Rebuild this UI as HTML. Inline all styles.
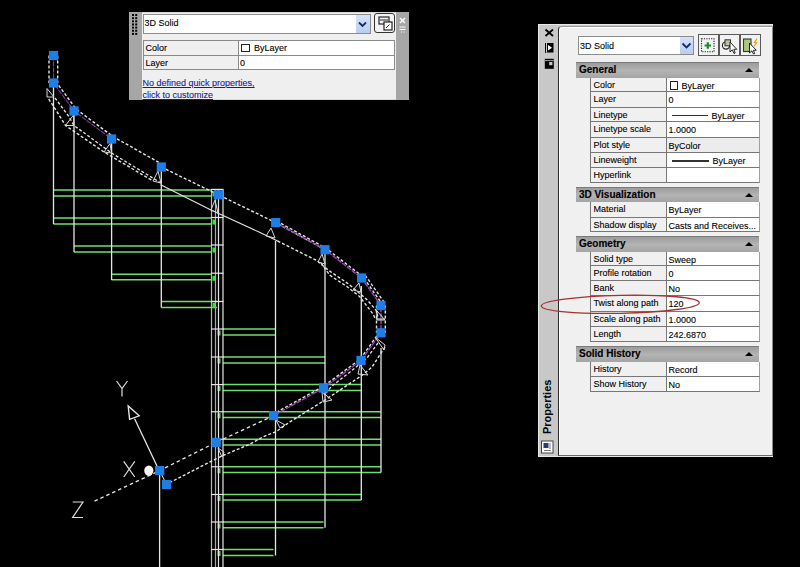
<!DOCTYPE html>
<html><head><meta charset="utf-8"><style>
*{margin:0;padding:0;box-sizing:border-box}
html,body{width:800px;height:567px;background:#000;overflow:hidden;position:relative;font-family:"Liberation Sans",sans-serif;}
.a{position:absolute}
.pc,.vc,.t9{-webkit-text-stroke:0.1px currentColor}
.hd{-webkit-text-stroke:0.15px #000}
svg.dr{position:absolute;left:0;top:0}
.t9{font-size:9px;color:#000;white-space:nowrap}
.hd{position:absolute;left:576px;width:183px;background:linear-gradient(#9c9c9c,#b4b4b4 50%,#a4a4a4);border-top:1px solid #7a7a7a;font-weight:bold;font-size:10px;line-height:14px;padding-left:3px;color:#000;white-space:nowrap}
.up{position:absolute;right:6px;top:5px;width:0;height:0;border-left:4px solid transparent;border-right:4px solid transparent;border-bottom:4px solid #000}
.pc{position:absolute;left:589.5px;width:76px;background:#f0f0f0;border-left:1px solid #777;border-bottom:1px solid #777;font-size:9px;white-space:nowrap}
.pc span{position:absolute;left:3px;top:2px;line-height:11px}
.vc{position:absolute;left:665.5px;width:94px;border-left:1px solid #777;border-right:1px solid #a0a0a0;border-bottom:1px solid #777;font-size:9px;white-space:nowrap}
.vc span{position:absolute;left:2px;top:3px;line-height:11px}
.chk{position:absolute;left:3px;top:2.5px;width:8.5px;height:9px;border:1px solid #222;background:#fff}
.ln{position:absolute;left:5px;top:7px;height:1px;background:#333}
</style></head><body>
<svg class="dr" width="800" height="567" viewBox="0 0 800 567">
<line x1="53.5" y1="190" x2="212" y2="190" stroke="#6ee06e" stroke-width="1.5" />
<line x1="53.5" y1="196" x2="212" y2="196" stroke="#6ee06e" stroke-width="1.5" />
<line x1="53.5" y1="218" x2="212" y2="218" stroke="#6ee06e" stroke-width="1.5" />
<line x1="53.5" y1="224" x2="212" y2="224" stroke="#6ee06e" stroke-width="1.5" />
<line x1="74" y1="246" x2="212" y2="246" stroke="#6ee06e" stroke-width="1.5" />
<line x1="74" y1="252" x2="212" y2="252" stroke="#6ee06e" stroke-width="1.5" />
<line x1="111.6" y1="274.3" x2="212" y2="274.3" stroke="#6ee06e" stroke-width="1.5" />
<line x1="111.6" y1="279.8" x2="212" y2="279.8" stroke="#6ee06e" stroke-width="1.5" />
<line x1="161.3" y1="301.5" x2="217" y2="301.5" stroke="#6ee06e" stroke-width="1.5" />
<line x1="161.3" y1="307.5" x2="217" y2="307.5" stroke="#6ee06e" stroke-width="1.5" />
<line x1="223" y1="329" x2="275.5" y2="329" stroke="#6ee06e" stroke-width="1.5" />
<line x1="223" y1="335" x2="275.5" y2="335" stroke="#6ee06e" stroke-width="1.5" />
<line x1="223" y1="357" x2="325" y2="357" stroke="#6ee06e" stroke-width="1.5" />
<line x1="223" y1="363" x2="325" y2="363" stroke="#6ee06e" stroke-width="1.5" />
<line x1="223" y1="384.6" x2="361.3" y2="384.6" stroke="#6ee06e" stroke-width="1.5" />
<line x1="223" y1="390.6" x2="361.3" y2="390.6" stroke="#6ee06e" stroke-width="1.5" />
<line x1="223" y1="411.75" x2="381" y2="411.75" stroke="#6ee06e" stroke-width="1.5" />
<line x1="223" y1="417.5" x2="381" y2="417.5" stroke="#6ee06e" stroke-width="1.5" />
<line x1="223" y1="439.25" x2="381" y2="439.25" stroke="#6ee06e" stroke-width="1.5" />
<line x1="223" y1="445" x2="381" y2="445" stroke="#6ee06e" stroke-width="1.5" />
<line x1="223" y1="466.75" x2="381" y2="466.75" stroke="#6ee06e" stroke-width="1.5" />
<line x1="223" y1="472.5" x2="381" y2="472.5" stroke="#6ee06e" stroke-width="1.5" />
<line x1="223" y1="494.5" x2="361.3" y2="494.5" stroke="#6ee06e" stroke-width="1.5" />
<line x1="223" y1="500" x2="361.3" y2="500" stroke="#6ee06e" stroke-width="1.5" />
<line x1="223" y1="522" x2="323.5" y2="522" stroke="#6ee06e" stroke-width="1.5" />
<line x1="223" y1="527.7" x2="323.5" y2="527.7" stroke="#6ee06e" stroke-width="1.5" />
<line x1="223" y1="549.5" x2="273.5" y2="549.5" stroke="#6ee06e" stroke-width="1.5" />
<line x1="223" y1="555.4" x2="273.5" y2="555.4" stroke="#6ee06e" stroke-width="1.5" />
<rect x="212.5" y="191.5" width="2.5" height="5" fill="#3ae03a"/>
<rect x="212.5" y="219.5" width="2.5" height="5" fill="#3ae03a"/>
<rect x="212.5" y="247.5" width="2.5" height="5" fill="#3ae03a"/>
<rect x="212.5" y="275.8" width="2.5" height="5" fill="#3ae03a"/>
<rect x="212.5" y="303.0" width="2.5" height="5" fill="#3ae03a"/>
<rect x="217.5" y="330.5" width="3" height="5" fill="#3ae03a"/>
<rect x="217.5" y="358.5" width="3" height="5" fill="#3ae03a"/>
<rect x="217.5" y="386.1" width="3" height="5" fill="#3ae03a"/>
<rect x="217.5" y="413.25" width="3" height="5" fill="#3ae03a"/>
<rect x="217.5" y="440.75" width="3" height="5" fill="#3ae03a"/>
<rect x="217.5" y="468.25" width="3" height="5" fill="#3ae03a"/>
<rect x="217.5" y="496.0" width="3" height="5" fill="#3ae03a"/>
<rect x="217.5" y="523.5" width="3" height="5" fill="#3ae03a"/>
<rect x="217.5" y="551.0" width="3" height="5" fill="#3ae03a"/>
<line x1="53.5" y1="87" x2="53.5" y2="224" stroke="#e6e6e6" stroke-width="1.3" />
<line x1="74" y1="115" x2="74" y2="252" stroke="#e6e6e6" stroke-width="1.3" />
<line x1="111.6" y1="143" x2="111.6" y2="280" stroke="#e6e6e6" stroke-width="1.3" />
<line x1="161.3" y1="171" x2="161.3" y2="307.5" stroke="#e6e6e6" stroke-width="1.3" />
<line x1="275.5" y1="241" x2="275.5" y2="555.4" stroke="#e6e6e6" stroke-width="1.3" />
<line x1="325" y1="254" x2="325" y2="527.7" stroke="#e6e6e6" stroke-width="1.3" />
<line x1="361.3" y1="286" x2="361.3" y2="500" stroke="#e6e6e6" stroke-width="1.3" />
<line x1="381" y1="348" x2="381" y2="472.5" stroke="#e6e6e6" stroke-width="1.3" />
<line x1="159.6" y1="475" x2="159.6" y2="567" stroke="#e6e6e6" stroke-width="1.3" />
<line x1="211.5" y1="189.4" x2="211.5" y2="567" stroke="#b8b8b8" stroke-width="1.2" />
<line x1="215.5" y1="189.4" x2="215.5" y2="567" stroke="#a8a8a8" stroke-width="1.2" />
<line x1="218.5" y1="189.4" x2="218.5" y2="567" stroke="#e6e6e6" stroke-width="1.2" />
<line x1="223" y1="189.4" x2="223" y2="567" stroke="#e6e6e6" stroke-width="1.2" />
<line x1="211" y1="189.4" x2="223.5" y2="189.4" stroke="#e6e6e6" stroke-width="1.2" />
<line x1="211" y1="217.5" x2="223.5" y2="217.5" stroke="#e6e6e6" stroke-width="1.2" />
<line x1="211" y1="245" x2="223.5" y2="245" stroke="#e6e6e6" stroke-width="1.2" />
<line x1="211" y1="273.2" x2="223.5" y2="273.2" stroke="#e6e6e6" stroke-width="1.2" />
<line x1="211" y1="301.5" x2="223.5" y2="301.5" stroke="#e6e6e6" stroke-width="1.2" />
<line x1="211" y1="329" x2="223.5" y2="329" stroke="#e6e6e6" stroke-width="1.2" />
<line x1="211" y1="357" x2="223.5" y2="357" stroke="#e6e6e6" stroke-width="1.2" />
<line x1="211" y1="384.6" x2="223.5" y2="384.6" stroke="#e6e6e6" stroke-width="1.2" />
<line x1="211" y1="411.75" x2="223.5" y2="411.75" stroke="#e6e6e6" stroke-width="1.2" />
<line x1="211" y1="439.25" x2="223.5" y2="439.25" stroke="#e6e6e6" stroke-width="1.2" />
<line x1="211" y1="466.75" x2="223.5" y2="466.75" stroke="#e6e6e6" stroke-width="1.2" />
<line x1="211" y1="494.5" x2="223.5" y2="494.5" stroke="#e6e6e6" stroke-width="1.2" />
<line x1="211" y1="522" x2="223.5" y2="522" stroke="#e6e6e6" stroke-width="1.2" />
<line x1="211" y1="549.5" x2="223.5" y2="549.5" stroke="#e6e6e6" stroke-width="1.2" />
<polyline points="57.7,55.5 57.7,83.0" fill="none" stroke="#e6e6e6" stroke-width="1.4" stroke-dasharray="3,2" />
<polyline points="49.0,55.5 49.0,83.0" fill="none" stroke="#e6e6e6" stroke-width="1.4" stroke-dasharray="3,2" />
<polyline points="55.759215896429666,81.34593121868542 75.94313004797017,108.98400257523095 113.11180097119782,136.64321027168623 162.67436245503418,164.56050664231435" fill="none" stroke="#e6e6e6" stroke-width="1.4" stroke-dasharray="3,2" />
<polyline points="161.3,167 218.3,194.8 275.7,222.6 325,249.7" fill="none" stroke="#e6e6e6" stroke-width="1.4" stroke-dasharray="3,2" />
<polyline points="276.56708525260615,221.02260874710396 325.975587689197,248.187310785162 362.8705132640582,276.72493292495955 382.4708385467727,304.46239026154944" fill="none" stroke="#e6e6e6" stroke-width="1.4" stroke-dasharray="3,2" />
<polyline points="365.27709636693186,275.40597565387355 384.67709636693183,302.90597565387355" fill="none" stroke="#e6e6e6" stroke-width="1.3" stroke-dasharray="3,2" />
<polyline points="385.3,305.5 385.3,332.8" fill="none" stroke="#e6e6e6" stroke-width="1.4" stroke-dasharray="3,2" />
<polyline points="376.5,305.5 376.5,332.8" fill="none" stroke="#e6e6e6" stroke-width="1.4" stroke-dasharray="3,2" />
<polyline points="379.7853752358342,331.9198371274161 359.9602616426952,359.3188227951214 322.7990105129181,386.73176664545355 272.8751062757826,414.2867867314902" fill="none" stroke="#e6e6e6" stroke-width="1.4" stroke-dasharray="3,2" />
<polyline points="273.6,415.6 216,442.4 159.7,470.6 94,501.4" fill="none" stroke="#e6e6e6" stroke-width="1.3" stroke-dasharray="3.5,3" />
<polyline points="53.5,55.5 53.5,83 74,111 111.6,139" fill="none" stroke="#8a3a9a" stroke-width="1.1" stroke-dasharray="5,1" />
<polyline points="275.7,222.6 325,249.7 361.6,278 381,305.5 381,332.8 361,360.4 323.6,388 273.6,415.6" fill="none" stroke="#9a48b0" stroke-width="1.4" stroke-dasharray="5,1" />
<polyline points="48.7,99 57.3,112.2 65.5,125.5 104,152 153,181" fill="none" stroke="#e6e6e6" stroke-width="1.4" stroke-dasharray="3,2" />
<polyline points="160.6,184.7 211,210 260,232.5 277.6,241" fill="none" stroke="#e6e6e6" stroke-width="1.1"  />
<polyline points="277.6,241 317,260.7 328.5,270.3 348.2,283.7 366.5,299.2 376.4,310.5 378,318" fill="none" stroke="#e6e6e6" stroke-width="1.4" stroke-dasharray="3,2" />
<line x1="376" y1="319" x2="385" y2="319" stroke="#e6e6e6" stroke-width="1.1" />
<polyline points="321,263 329.9,275.3 346.8,286.5 359.5,296.4 373.6,314.8 375,319" fill="none" stroke="#e6e6e6" stroke-width="1.3" stroke-dasharray="3,2" />
<polyline points="55,98 68.5,116 74,125.5 111.5,153 161,183" fill="none" stroke="#e6e6e6" stroke-width="1.3" stroke-dasharray="3,2" />
<polyline points="378,343 367,358 350,372 332,386 324,395" fill="none" stroke="#e6e6e6" stroke-width="1.3" stroke-dasharray="3,2" />
<polyline points="385,347 372,367 362.5,375 325,400 290,421.8 276,431.7 263.5,436.6 249.4,444.4 222.6,455.6 200,467 171,482" fill="none" stroke="#e6e6e6" stroke-width="1.4" stroke-dasharray="3,2" />
<line x1="159.7" y1="470.6" x2="166.5" y2="484.5" stroke="#e6e6e6" stroke-width="1" />
<polygon points="47,88.5 47,97 54,97" fill="none" stroke="#d8d8d8" stroke-width="1"/>
<polygon points="73.5,115 65.5,125.5 74,125.5" fill="none" stroke="#d8d8d8" stroke-width="1"/>
<polygon points="110,143.5 104,152 111.5,153" fill="none" stroke="#d8d8d8" stroke-width="1"/>
<polygon points="158,171 153,181 161,183" fill="none" stroke="#d8d8d8" stroke-width="1"/>
<polygon points="215,200 211,210 218,213" fill="none" stroke="#d8d8d8" stroke-width="1"/>
<polygon points="271,228 266,236 275,238" fill="none" stroke="#d8d8d8" stroke-width="1"/>
<polygon points="322,254 318,262 325,264" fill="none" stroke="#d8d8d8" stroke-width="1"/>
<polygon points="359,283 353,290 361,292" fill="none" stroke="#d8d8d8" stroke-width="1"/>
<polygon points="377,311 377,320 385,320" fill="none" stroke="#d8d8d8" stroke-width="1"/>
<polygon points="375,337 385,345 384,350" fill="none" stroke="#d8d8d8" stroke-width="1"/>
<polygon points="360,365 368,375 358,374" fill="none" stroke="#d8d8d8" stroke-width="1"/>
<polygon points="322,392 332,400 323,402" fill="none" stroke="#d8d8d8" stroke-width="1"/>
<polygon points="276,420 285,425 280,428" fill="none" stroke="#d8d8d8" stroke-width="1"/>
<polygon points="218,448 224,452 222,457" fill="none" stroke="#d8d8d8" stroke-width="1"/>
<rect x="48.9" y="50.9" width="9.2" height="9.2" fill="#1f7ee6"/>
<rect x="48.9" y="78.4" width="9.2" height="9.2" fill="#1f7ee6"/>
<rect x="69.4" y="106.4" width="9.2" height="9.2" fill="#1f7ee6"/>
<rect x="107.0" y="134.4" width="9.2" height="9.2" fill="#1f7ee6"/>
<rect x="156.70000000000002" y="162.4" width="9.2" height="9.2" fill="#1f7ee6"/>
<rect x="213.70000000000002" y="190.20000000000002" width="9.2" height="9.2" fill="#1f7ee6"/>
<rect x="271.09999999999997" y="218.0" width="9.2" height="9.2" fill="#1f7ee6"/>
<rect x="320.4" y="245.1" width="9.2" height="9.2" fill="#1f7ee6"/>
<rect x="357.0" y="273.4" width="9.2" height="9.2" fill="#1f7ee6"/>
<rect x="376.4" y="300.9" width="9.2" height="9.2" fill="#1f7ee6"/>
<rect x="376.4" y="328.2" width="9.2" height="9.2" fill="#1f7ee6"/>
<rect x="356.4" y="355.79999999999995" width="9.2" height="9.2" fill="#1f7ee6"/>
<rect x="319.0" y="383.4" width="9.2" height="9.2" fill="#1f7ee6"/>
<rect x="269.0" y="411.0" width="9.2" height="9.2" fill="#1f7ee6"/>
<rect x="211.4" y="437.79999999999995" width="9.2" height="9.2" fill="#1f7ee6"/>
<rect x="155.1" y="466.0" width="9.2" height="9.2" fill="#1f7ee6"/>
<rect x="161.9" y="479.9" width="9.2" height="9.2" fill="#1f7ee6"/>
<line x1="157" y1="466" x2="134.6" y2="418.7" stroke="#e6e6e6" stroke-width="1.3"/>
<polygon points="128.2,406 139.2,415.8 129.6,419.4" fill="none" stroke="#e6e6e6" stroke-width="1.4"/>
<ellipse cx="148.8" cy="470.6" rx="4.6" ry="5.2" fill="#f4f4f4"/>
<path d="M116.5,381 L122,388.5 L127.5,381 M122,388.5 L122,396.5" fill="none" stroke="#e0e0e0" stroke-width="1.2"/>
<path d="M123.7,461.4 L134.8,477 M134.8,461.4 L123.7,477" fill="none" stroke="#e0e0e0" stroke-width="1.2"/>
<path d="M72.7,502 L83,502 L72.7,517.5 L83,517.5" fill="none" stroke="#e0e0e0" stroke-width="1.2"/>
</svg>
<!-- quick properties panel -->
<div class="a" style="left:129px;top:12px;width:280px;height:88px;background:#efefef;border:1px solid #d8d8d8"></div>
<div class="a" style="left:129px;top:12px;width:13px;height:88px;background:#a6a6a6"></div>
<div class="a" style="left:396px;top:12px;width:13px;height:88px;background:#a6a6a6"></div>
<div class="a" style="left:142.5px;top:13.5px;width:228px;height:20px;background:#fff;border:1px solid #8c8c8c"></div>
<div class="a" style="left:356px;top:14.5px;width:14px;height:18px;background:linear-gradient(#d6e2f8,#b8cdf2)"></div>
<div class="a t9" style="left:144.5px;top:17px;line-height:12px">3D Solid</div>
<div class="a" style="left:374px;top:13px;width:21px;height:20px;background:#f4f4f4;border:1.5px solid #333;border-radius:3px"></div>
<div class="a" style="left:142.5px;top:40px;width:252px;height:30px;background:#fff;border:1px solid #8a8a8a"></div>
<div class="a" style="left:143.5px;top:41px;width:95px;height:28px;background:#f0f0f0;border-right:1px solid #8a8a8a"></div>
<div class="a" style="left:143px;top:55px;width:251px;height:1px;background:#8a8a8a"></div>
<div class="a t9" style="left:145.5px;top:42px;line-height:12px">Color</div>
<div class="a t9" style="left:145.5px;top:57px;line-height:12px">Layer</div>
<div class="a" style="left:241px;top:43.6px;width:8.5px;height:8px;border:1px solid #222"></div>
<div class="a t9" style="left:254px;top:42px;line-height:12px">ByLayer</div>
<div class="a t9" style="left:240px;top:57px;line-height:12px">0</div>
<div class="a t9" style="left:142.5px;top:77px;line-height:12px;color:#1a1a90;text-decoration:underline">No defined quick properties,</div>
<div class="a t9" style="left:142.5px;top:89px;line-height:12px;color:#1a1a90;text-decoration:underline">click to customize</div>
<!-- properties palette -->
<div class="a" style="left:538px;top:23.5px;width:235px;height:433px;background:#c8c8c8;border:1px solid #e8e8e8"></div>
<div class="a" style="left:557.5px;top:25.5px;width:215px;height:430px;background:#f0f0f0;border-left:1px solid #2a2a2a;border-top:1px solid #9a9a9a;box-shadow:inset 1px 1px 0 #fff;border-right:1px solid #8a8a8a;border-bottom:1px solid #6a6a6a;border-top-left-radius:4px"></div>
<div class="a" style="left:577.5px;top:36px;width:116px;height:19px;background:#fff;border:1px solid #8c8c8c"></div>
<div class="a" style="left:680px;top:37px;width:13px;height:17px;background:linear-gradient(#d6e2f8,#b8cdf2)"></div>
<div class="a t9" style="left:580px;top:40px;line-height:12px">3D Solid</div>
<div class="a" style="left:697.5px;top:34px;width:21px;height:21.5px;background:#f2f2f2;border:1.3px solid #5a5a5a"></div>
<div class="a" style="left:718.5px;top:34px;width:21px;height:21.5px;background:#f2f2f2;border:1.3px solid #5a5a5a"></div>
<div class="a" style="left:739.5px;top:34px;width:21px;height:21.5px;background:#f2f2f2;border:1.3px solid #5a5a5a"></div>
<div class="hd" style="top:62px;height:16px">General<span class="up"></span></div>
<div class="pc" style="top:78px;height:14px"><span>Color</span></div>
<div class="vc" style="top:78px;height:14px;background:#fff"><i class="chk"></i><span style="left:15px">ByLayer</span></div>
<div class="pc" style="top:92px;height:16px"><span>Layer</span></div>
<div class="vc" style="top:92px;height:16px;background:#fff"><span>0</span></div>
<div class="pc" style="top:108px;height:14px"><span>Linetype</span></div>
<div class="vc" style="top:108px;height:14px;background:#fff"><i class="ln" style="width:36px;height:1px"></i><span style="left:45px">ByLayer</span></div>
<div class="pc" style="top:122px;height:16px"><span>Linetype scale</span></div>
<div class="vc" style="top:122px;height:16px;background:#fff"><span>1.0000</span></div>
<div class="pc" style="top:138px;height:15px"><span>Plot style</span></div>
<div class="vc" style="top:138px;height:15px;background:#ececec"><span>ByColor</span></div>
<div class="pc" style="top:153px;height:15px"><span>Lineweight</span></div>
<div class="vc" style="top:153px;height:15px;background:#fff"><i class="ln" style="width:37px;height:2px"></i><span style="left:46px">ByLayer</span></div>
<div class="pc" style="top:168px;height:15px"><span>Hyperlink</span></div>
<div class="vc" style="top:168px;height:15px;background:#fff"><span></span></div>
<div class="hd" style="top:187px;height:15px">3D Visualization<span class="up"></span></div>
<div class="pc" style="top:202px;height:16px"><span>Material</span></div>
<div class="vc" style="top:202px;height:16px;background:#fff"><span>ByLayer</span></div>
<div class="pc" style="top:218px;height:14px"><span>Shadow display</span></div>
<div class="vc" style="top:218px;height:14px;background:#fff"><span>Casts and Receives...</span></div>
<div class="hd" style="top:236px;height:16px">Geometry<span class="up"></span></div>
<div class="pc" style="top:252px;height:14px"><span>Solid type</span></div>
<div class="vc" style="top:252px;height:14px;background:#fff"><span>Sweep</span></div>
<div class="pc" style="top:266px;height:15px"><span>Profile rotation</span></div>
<div class="vc" style="top:266px;height:15px;background:#fff"><span>0</span></div>
<div class="pc" style="top:281px;height:15px"><span>Bank</span></div>
<div class="vc" style="top:281px;height:15px;background:#fff"><span>No</span></div>
<div class="pc" style="top:296px;height:16px"><span>Twist along path</span></div>
<div class="vc" style="top:296px;height:16px;background:#fff"><span>120</span></div>
<div class="pc" style="top:312px;height:15px"><span>Scale along path</span></div>
<div class="vc" style="top:312px;height:15px;background:#fff"><span>1.0000</span></div>
<div class="pc" style="top:327px;height:15px"><span>Length</span></div>
<div class="vc" style="top:327px;height:15px;background:#fff"><span>242.6870</span></div>
<div class="hd" style="top:346px;height:16px">Solid History<span class="up"></span></div>
<div class="pc" style="top:362px;height:15px"><span>History</span></div>
<div class="vc" style="top:362px;height:15px;background:#fff"><span>Record</span></div>
<div class="pc" style="top:377px;height:15px"><span>Show History</span></div>
<div class="vc" style="top:377px;height:15px;background:#fff"><span>No</span></div>
<div class="a" style="left:553px;top:379px;width:55px;height:12px;transform-origin:0 0;transform:rotate(-90deg) translate(-55px,-12px);font-weight:bold;font-size:11px;line-height:12px;white-space:nowrap">Properties</div>

<svg class="dr" width="800" height="567" viewBox="0 0 800 567">
<!-- grip dots small panel -->
<rect x="132" y="14.0" width="2" height="2" fill="#000"/>
<rect x="135.2" y="14.0" width="2" height="2" fill="#000"/>
<rect x="132" y="17.15" width="2" height="2" fill="#000"/>
<rect x="135.2" y="17.15" width="2" height="2" fill="#000"/>
<rect x="132" y="20.3" width="2" height="2" fill="#000"/>
<rect x="135.2" y="20.3" width="2" height="2" fill="#000"/>
<rect x="132" y="23.45" width="2" height="2" fill="#000"/>
<rect x="135.2" y="23.45" width="2" height="2" fill="#000"/>
<rect x="132" y="26.6" width="2" height="2" fill="#000"/>
<rect x="135.2" y="26.6" width="2" height="2" fill="#000"/>
<rect x="132" y="29.75" width="2" height="2" fill="#000"/>
<rect x="135.2" y="29.75" width="2" height="2" fill="#000"/>
<rect x="132" y="32.9" width="2" height="2" fill="#000"/>
<rect x="135.2" y="32.9" width="2" height="2" fill="#000"/>
<!-- small panel chevron -->
<path d="M359,22.5 L362.5,26 L366,22.5" fill="none" stroke="#1a2a6a" stroke-width="1.8"/>
<path d="M682.5,43.5 L686.5,47.5 L690.5,43.5" fill="none" stroke="#1a2a6a" stroke-width="1.8"/>
<!-- small panel icon -->
<rect x="379" y="17" width="10" height="7" fill="none" stroke="#222" stroke-width="1.2"/>
<line x1="380" y1="20" x2="388" y2="20" stroke="#222" stroke-width="1"/>
<rect x="384" y="22" width="8" height="8" fill="#fff" stroke="#222" stroke-width="1.2"/>
<path d="M386,28 L389.5,24.5" stroke="#222" stroke-width="1"/>
<!-- small panel X and menu -->
<path d="M400,18 L405,23 M405,18 L400,23" stroke="#fff" stroke-width="1.4"/>
<path d="M399.5,27 H405.5 M399.5,29.5 H405.5 M401,32 h1 M403.5,32 h1" stroke="#fff" stroke-width="1"/>
<!-- big panel strip icons -->
<path d="M545.5,29.5 L553,36 M553,29.5 L545.5,36" stroke="#000" stroke-width="1.8"/>
<rect x="545" y="43" width="8.5" height="9.5" fill="#000"/>
<rect x="545" y="43" width="1.2" height="9.5" fill="#000"/>
<path d="M548,45 L552,47.8 L548,50.6 Z" fill="#fff"/>
<line x1="546.5" y1="43" x2="546.5" y2="52.5" stroke="#c8c8c8" stroke-width="1"/>
<rect x="544.8" y="58.8" width="9" height="10" fill="#000"/>
<rect x="549.2" y="62" width="3.2" height="3.2" fill="#c8c8c8"/>
<line x1="544.8" y1="60.6" x2="553.8" y2="60.6" stroke="#c8c8c8" stroke-width="0.8"/>
<!-- button icons -->
<rect x="701.5" y="38.8" width="12.5" height="13" fill="none" stroke="#222" stroke-width="1.1" stroke-dasharray="1.2,1.2"/>
<path d="M707.8,42.3 V48.7 M704.6,45.5 H711" stroke="#1a8a2a" stroke-width="2.2"/>
<circle cx="726" cy="45.5" r="3.6" fill="none" stroke="#222" stroke-width="1.1"/>
<rect x="725" y="39.8" width="5.5" height="6" fill="#b8c89a" stroke="#333" stroke-width="1"/>
<path d="M730,42 L730,52 L732.3,49.8 L734,53.5 L735.2,53 L733.8,49.3 L736.8,49.3 Z" fill="#fff" stroke="#111" stroke-width="0.9"/>
<rect x="743.5" y="39" width="7.5" height="12.5" fill="#a8c878" stroke="#333" stroke-width="1.1"/>
<path d="M749.5,43 L749.5,53 L751.8,50.8 L753.5,54 L754.7,53.5 L753.3,50.3 L756.3,50.3 Z" fill="#fff" stroke="#111" stroke-width="0.9"/>
<path d="M757,38.5 L754.5,42.5 L756.5,42.5 L754,46.5" fill="none" stroke="#e8a020" stroke-width="1.2"/>
<!-- properties bottom icon -->
<rect x="541.5" y="441" width="11.5" height="12" fill="#fff" stroke="#444" stroke-width="1"/>
<rect x="543.5" y="443" width="5" height="5" fill="#2a3a7a"/>
<path d="M550,443 v6 M544,450.5 h7" stroke="#555" stroke-width="0.8"/>
</svg>

<svg class="dr" width="800" height="567" viewBox="0 0 800 567">
<ellipse cx="620.3" cy="304.3" rx="79" ry="9" transform="rotate(-1.2 620.3 304.3)" fill="none" stroke="#a83030" stroke-width="1.3"/>
</svg>
</body></html>
